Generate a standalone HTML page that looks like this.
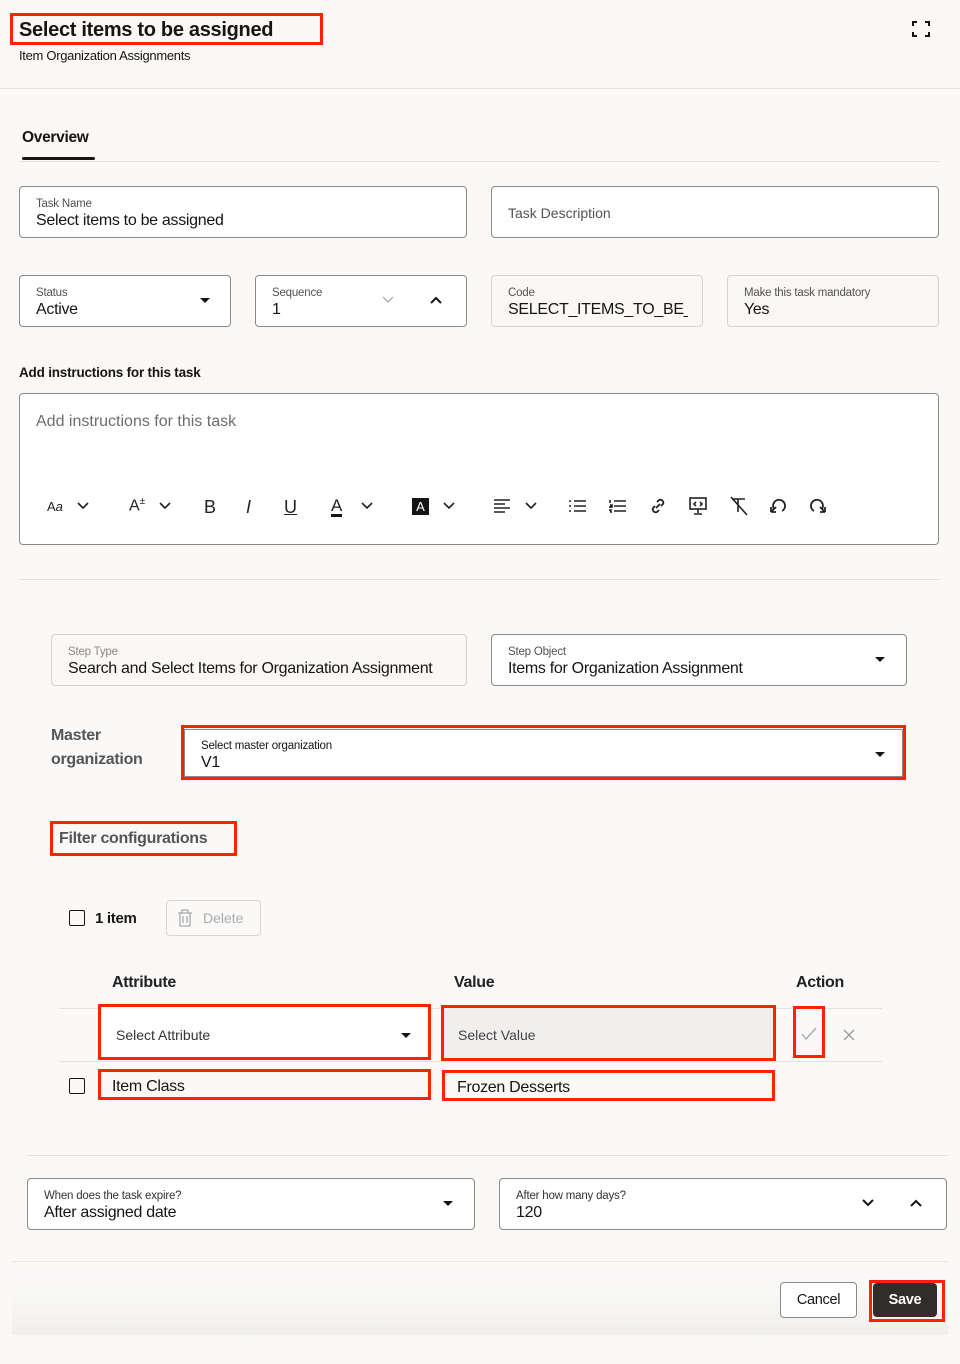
<!DOCTYPE html>
<html><head><meta charset="utf-8"><style>
*{box-sizing:border-box;margin:0;padding:0}
body{width:960px;height:1364px;background:#faf9f8;font-family:"Liberation Sans",sans-serif;color:#161513;position:relative;overflow:hidden}
.a{position:absolute}
.f{position:absolute;background:#fff;border:1px solid #8b8985;border-radius:4px}
.f.d{background:#f9f8f7;border-color:#d6d3d0}
.lb{position:absolute;left:16px;top:11px;font-size:11.5px;color:#545250;letter-spacing:-.2px}
.v{position:absolute;left:16px;top:25px;font-size:16px;letter-spacing:-.3px;white-space:nowrap}
.r{position:absolute;border:3px solid #ff2200}
.hl{position:absolute;height:1px;background:#e4e2df}
.tri{position:absolute;width:0;height:0;border-left:5px solid transparent;border-right:5px solid transparent;border-top:5px solid #161513}
.tb{position:absolute;top:497px;font-size:16px;color:#222}
.ch{position:absolute;top:502px}
</style></head><body>
<div class="a" style="left:19px;top:19px;font-size:20px;font-weight:bold;letter-spacing:-.3px">Select items to be assigned</div>
<div class="r" style="left:10px;top:13px;width:313px;height:32px"></div>
<div class="a" style="left:19px;top:48px;font-size:13px;letter-spacing:-.3px">Item Organization Assignments</div>
<svg class="a" style="left:911px;top:20px" width="20" height="18" viewBox="0 0 20 18" fill="none" stroke="#161513" stroke-width="2"><path d="M2 6V2h4M14 2h4v4M18 12v4h-4M6 16H2v-4"/></svg>
<div class="hl" style="left:0;top:88px;width:960px"></div>
<div class="a" style="left:22px;top:129px;font-size:15.5px;font-weight:bold;letter-spacing:-.3px">Overview</div>
<div class="hl" style="left:19px;top:161px;width:920px"></div>
<div class="a" style="left:22px;top:157px;width:73px;height:3px;background:#161513;border-radius:2px"></div>

<div class="f" style="left:19px;top:186px;width:448px;height:52px"><div class="lb">Task Name</div><div class="v">Select items to be assigned</div></div>
<div class="f" style="left:491px;top:186px;width:448px;height:52px"><div class="a" style="left:16px;top:18px;font-size:14px;color:#545250">Task Description</div></div>

<div class="f" style="left:19px;top:275px;width:212px;height:52px"><div class="lb">Status</div><div class="v">Active</div><div class="tri" style="left:180px;top:22px"></div></div>
<div class="f" style="left:255px;top:275px;width:212px;height:52px"><div class="lb">Sequence</div><div class="v">1</div>
<svg class="a" style="left:126px;top:20px" width="12" height="8"><path d="M1 1l5 5 5-5" fill="none" stroke="#aaa" stroke-width="1.3"/></svg>
<svg class="a" style="left:174px;top:20px" width="12" height="8"><path d="M1 7l5-5 5 5" fill="none" stroke="#161513" stroke-width="2"/></svg></div>
<div class="f d" style="left:491px;top:275px;width:212px;height:52px"><div class="lb">Code</div><div class="v" style="width:180px;overflow:hidden">SELECT_ITEMS_TO_BE_A</div></div>
<div class="f d" style="left:727px;top:275px;width:212px;height:52px"><div class="lb">Make this task mandatory</div><div class="v">Yes</div></div>

<div class="a" style="left:19px;top:365px;font-size:13.5px;font-weight:bold;letter-spacing:-.2px">Add instructions for this task</div>
<div class="f" style="left:19px;top:393px;width:920px;height:152px"><div class="a" style="left:16px;top:19px;font-size:16px;color:#6f6d6a">Add instructions for this task</div></div>
<div class="tb" style="left:47px;font-size:13px;top:499px">A<i>a</i></div>
<svg class="ch" style="left:77px" width="12" height="8"><path d="M1 1l5 5 5-5" fill="none" stroke="#222" stroke-width="1.6"/></svg>
<div class="tb" style="left:129px;top:496px">A<sup style="font-size:10px">±</sup></div>
<svg class="ch" style="left:159px" width="12" height="8"><path d="M1 1l5 5 5-5" fill="none" stroke="#222" stroke-width="1.6"/></svg>
<div class="tb" style="left:204px;font-size:18px">B</div>
<div class="tb" style="left:246px;font-size:18px;font-style:italic">I</div>
<div class="tb" style="left:284px;font-size:18px;text-decoration:underline">U</div>
<div class="tb" style="left:331px;font-size:17px;border-bottom:3px solid #161513;line-height:17px">A</div>
<svg class="ch" style="left:361px" width="12" height="8"><path d="M1 1l5 5 5-5" fill="none" stroke="#222" stroke-width="1.6"/></svg>
<div class="tb" style="left:412px;top:498px;background:#161513;color:#fff;font-size:13px;width:17px;height:17px;text-align:center;line-height:17px">A</div>
<svg class="ch" style="left:443px" width="12" height="8"><path d="M1 1l5 5 5-5" fill="none" stroke="#222" stroke-width="1.6"/></svg>
<svg class="a" style="left:494px;top:498px" width="18" height="16" stroke="#222" stroke-width="1.6"><path d="M0 2h16M0 6h11M0 10h16M0 14h11"/></svg>
<svg class="ch" style="left:525px" width="12" height="8"><path d="M1 1l5 5 5-5" fill="none" stroke="#222" stroke-width="1.6"/></svg>
<svg class="a" style="left:569px;top:499px" width="18" height="14" stroke="#222" stroke-width="1.6"><path d="M0 2h2M5 2h12M0 7h2M5 7h12M0 12h2M5 12h12"/></svg>
<svg class="a" style="left:609px;top:499px" width="18" height="14" stroke="#222" stroke-width="1.6"><path d="M5 2h12M5 7h12M5 12h12M1 1v3M1 6h2v2H1v1M0 11h2v3"/></svg>
<svg class="a" style="left:649px;top:497px" width="18" height="18" fill="none" stroke="#222" stroke-width="1.8"><path d="M7 11l4-4M8 5l2-2a3 3 0 014 4l-2 2M10 13l-2 2a3 3 0 01-4-4l2-2"/></svg>
<svg class="a" style="left:689px;top:497px" width="18" height="18" fill="none" stroke="#222" stroke-width="1.6"><rect x="1" y="1" width="16" height="11"/><path d="M9 12v4M5 17h8M7 5l-2 2 2 2M11 5l2 2-2 2"/></svg>
<svg class="a" style="left:729px;top:496px" width="20" height="20" fill="none" stroke="#222" stroke-width="1.6"><path d="M3 3h13M9 3v13M2 1l16 18"/></svg>
<svg class="a" style="left:768px;top:498px" width="20" height="16" fill="none" stroke="#222" stroke-width="1.8"><path d="M3 14L8 9M3 14V9M3 14h5M6 11a6 6 0 1 1 8 2"/></svg>
<svg class="a" style="left:808px;top:498px" width="20" height="16" fill="none" stroke="#222" stroke-width="1.8"><path d="M17 14l-5-5M17 14V9M17 14h-5M14 11a6 6 0 1 0-8 2"/></svg>

<div class="hl" style="left:19px;top:579px;width:920px"></div>

<div class="f d" style="left:51px;top:634px;width:416px;height:52px"><div class="lb" style="color:#8b8985">Step Type</div><div class="v" style="letter-spacing:-.3px">Search and Select Items for Organization Assignment</div></div>
<div class="f" style="left:491px;top:634px;width:416px;height:52px"><div class="lb">Step Object</div><div class="v">Items for Organization Assignment</div><div class="tri" style="left:383px;top:22px"></div></div>

<div class="a" style="left:51px;top:724px;font-size:16px;font-weight:bold;color:#555;line-height:24px;letter-spacing:-.3px">Master<br>organization</div>
<div class="f" style="left:184px;top:729px;width:719px;height:48px;border-radius:0"><div class="lb" style="top:10px;color:#161513;font-size:11.5px">Select master organization</div><div class="v" style="top:24px">V1</div><div class="tri" style="left:690px;top:22px"></div></div>
<div class="r" style="left:181px;top:725px;width:725px;height:55px"></div>

<div class="a" style="left:59px;top:830px;font-size:16px;font-weight:bold;color:#555;letter-spacing:-.3px">Filter configurations</div>
<div class="r" style="left:50px;top:821px;width:187px;height:35px"></div>

<div class="a" style="left:69px;top:910px;width:16px;height:16px;border:1.5px solid #161513;border-radius:2px"></div>
<div class="a" style="left:95px;top:910px;font-size:15px;font-weight:bold;letter-spacing:-.3px">1 item</div>
<div class="a" style="left:166px;top:900px;width:95px;height:36px;border:1px solid #d6d3d0;border-radius:4px"></div>
<svg class="a" style="left:177px;top:909px" width="16" height="18" fill="none" stroke="#aaa" stroke-width="1.3"><path d="M1 4h14M5 4V1h6v3M3 4v13h10V4M6 7v7M10 7v7"/></svg>
<div class="a" style="left:203px;top:910px;font-size:14px;color:#aaa">Delete</div>

<div class="a" style="left:112px;top:974px;font-size:16px;font-weight:bold;color:#222;letter-spacing:-.3px">Attribute</div>
<div class="a" style="left:454px;top:974px;font-size:16px;font-weight:bold;color:#222;letter-spacing:-.3px">Value</div>
<div class="a" style="left:796px;top:974px;font-size:16px;font-weight:bold;color:#222;letter-spacing:-.3px">Action</div>
<div class="hl" style="left:59px;top:1008px;width:823px"></div>
<div class="hl" style="left:59px;top:1061px;width:823px"></div>

<div class="a" style="left:101px;top:1007px;width:327px;height:50px;background:#fff"></div>
<div class="a" style="left:116px;top:1027px;font-size:14px;color:#333">Select Attribute</div>
<div class="tri" style="left:401px;top:1033px"></div>
<div class="r" style="left:98px;top:1004px;width:333px;height:56px"></div>
<div class="a" style="left:444px;top:1008px;width:329px;height:50px;background:#f0efed"></div>
<div class="a" style="left:458px;top:1027px;font-size:14px;color:#444">Select Value</div>
<div class="r" style="left:441px;top:1005px;width:335px;height:56px"></div>
<svg class="a" style="left:801px;top:1027px" width="16" height="14" fill="none" stroke="#aaa" stroke-width="1.4"><path d="M1 7l4 5 10-11"/></svg>
<div class="r" style="left:793px;top:1006px;width:32px;height:52px"></div>
<svg class="a" style="left:843px;top:1029px" width="12" height="12" stroke="#999" stroke-width="1.3"><path d="M1 1l10 10M11 1L1 11"/></svg>

<div class="a" style="left:69px;top:1078px;width:16px;height:16px;border:1.5px solid #161513;border-radius:2px"></div>
<div class="a" style="left:112px;top:1078px;font-size:16px;letter-spacing:-.3px">Item Class</div>
<div class="r" style="left:98px;top:1069px;width:333px;height:31px"></div>
<div class="a" style="left:457px;top:1079px;font-size:16px;letter-spacing:-.3px">Frozen Desserts</div>
<div class="r" style="left:442px;top:1070px;width:333px;height:31px"></div>

<div class="hl" style="left:27px;top:1155px;width:920px"></div>
<div class="f" style="left:27px;top:1178px;width:448px;height:52px"><div class="lb" style="color:#333">When does the task expire?</div><div class="v">After assigned date</div><div class="tri" style="left:415px;top:22px"></div></div>
<div class="f" style="left:499px;top:1178px;width:448px;height:52px"><div class="lb" style="color:#333">After how many days?</div><div class="v">120</div>
<svg class="a" style="left:362px;top:20px" width="12" height="8"><path d="M1 1l5 5 5-5" fill="none" stroke="#161513" stroke-width="2"/></svg>
<svg class="a" style="left:410px;top:20px" width="12" height="8"><path d="M1 7l5-5 5 5" fill="none" stroke="#161513" stroke-width="2"/></svg></div>

<div class="a" style="left:12px;top:1261px;width:936px;height:74px;border-top:1px solid #e8e6e3;background:linear-gradient(#faf9f8 0%,#f9f8f7 40%,#f0efed 100%)"></div>
<div class="a" style="left:780px;top:1282px;width:77px;height:36px;border:1px solid #8b8985;border-radius:4px;background:#fff;font-size:14.5px;text-align:center;line-height:34px;letter-spacing:-.3px">Cancel</div>
<div class="a" style="left:873px;top:1283px;width:64px;height:34px;background:#312d2a;border-radius:4px;color:#fff;font-size:14.5px;font-weight:bold;text-align:center;line-height:34px;letter-spacing:-.3px">Save</div>
<div class="r" style="left:869px;top:1280px;width:76px;height:42px"></div>
</body></html>
